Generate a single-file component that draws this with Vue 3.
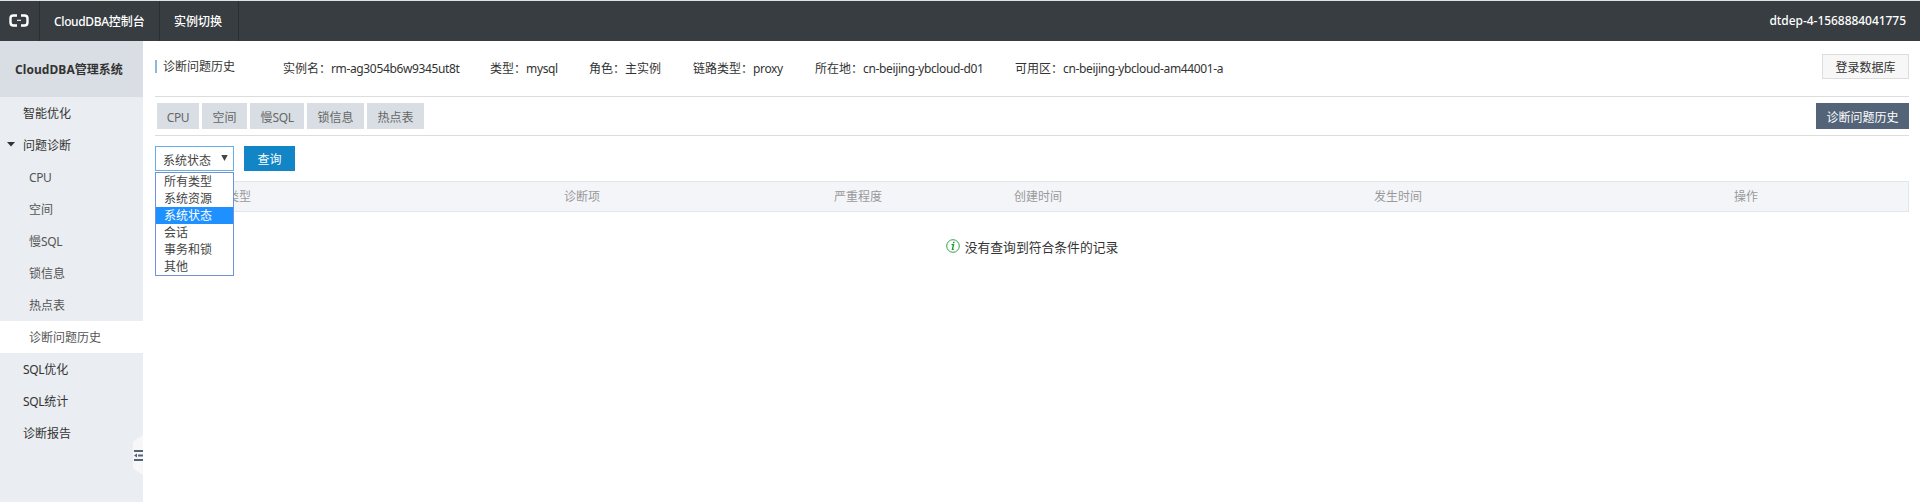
<script setup>
const menu = [
  { zh: '智能优化' },
  { zh: '问题诊断', open: true },
  { lat: 'CPU', sub: true },
  { zh: '空间', sub: true },
  { pre: '慢', lat: 'SQL', sub: true },
  { zh: '锁信息', sub: true },
  { zh: '热点表', sub: true },
  { zh: '诊断问题历史', sub: true, active: true },
  { lat: 'SQL', zh: '优化' },
  { lat: 'SQL', zh: '统计' },
  { zh: '诊断报告' },
]
const info = [
  { k: '实例名：', v: 'rm-ag3054b6w9345ut8t', w: 207 },
  { k: '类型：', v: 'mysql', w: 99 },
  { k: '角色：', zh: '主实例', w: 104 },
  { k: '链路类型：', v: 'proxy', w: 122 },
  { k: '所在地：', v: 'cn-beijing-ybcloud-d01', w: 200 },
  { k: '可用区：', v: 'cn-beijing-ybcloud-am44001-a', w: 230 },
]
const tabs = [
  { lat: 'CPU', w: 42 },
  { zh: '空间', w: 45 },
  { zh: '慢', lat: 'SQL', w: 54 },
  { zh: '锁信息', w: 57 },
  { zh: '热点表', w: 57 },
]
const options = ['所有类型', '系统资源', '系统状态', '会话', '事务和锁', '其他']
const columns = ['问题类型', '诊断项', '严重程度', '创建时间', '发生时间', '操作']
</script>

<template>
  <div class="page">
    <header class="topbar">
      <div class="logo">
        <svg width="20" height="13" viewBox="0 0 20 13">
          <path d="M8 1.500H4.500Q1.500 1.500 1.500 4.500v4q0 3 3 3H8M12 1.500h3.500q3 0 3 3v4q0 3-3 3H12" fill="none" stroke="#fff" stroke-width="2.400" />
          <path d="M8 6.300h4" stroke="#fff" stroke-width="1.100" />
        </svg>
      </div>
      <div class="nav console"><span class="lat">CloudDBA</span>控制台</div>
      <div class="nav switch">实例切换</div>
      <div class="user lat">dtdep-4-1568884041775</div>
    </header>
    <div class="body">
      <aside class="side">
        <div class="side-title"><span class="lat">CloudDBA</span>管理系统</div>
        <div v-for="(m, i) in menu" :key="i" class="item" :class="{ sub: m.sub, active: m.active }">
          <svg v-if="m.open" class="caret" width="8" height="5" viewBox="0 0 8 5"><path d="M0 0h8L4 4.500z" fill="#333" /></svg>
          {{ m.pre }}<span v-if="m.lat" class="lat">{{ m.lat }}</span>{{ m.zh }}
        </div>
        <svg class="handle" width="10" height="40" viewBox="0 0 10 40">
          <path d="M10 0v40L0 33.500V6.500z" fill="#f7f7f7" />
          <path d="M1 16h9M5 20.500h5M1 25h9" stroke="#546478" stroke-width="2" />
          <path d="M1 20.500l3-2v4z" fill="#546478" />
        </svg>
      </aside>
      <main class="main">
        <section class="head">
          <h1>诊断问题历史</h1>
          <div class="info">
            <div v-for="x in info" :key="x.k" :style="{ width: x.w + 'px' }">{{ x.k }}<span v-if="x.v" class="lat">{{ x.v }}</span>{{ x.zh }}</div>
          </div>
          <button class="login">登录数据库</button>
        </section>
        <section class="tabs">
          <div v-for="(t, i) in tabs" :key="i" class="tab" :style="{ width: t.w + 'px' }">{{ t.zh }}<span v-if="t.lat" class="lat">{{ t.lat }}</span></div>
          <div class="tab history">诊断问题历史</div>
        </section>
        <section class="filter">
          <div class="select">
            <span>系统状态</span>
            <svg width="7" height="6" viewBox="0 0 7 6"><path d="M.3 0h6.400L3.500 6z" fill="#444" /></svg>
            <div class="options">
              <div v-for="o in options" :key="o" class="option" :class="{ chosen: o === '系统状态' }">{{ o }}</div>
            </div>
          </div>
          <button class="query">查询</button>
        </section>
        <div class="thead"><span v-for="c in columns" :key="c">{{ c }}</span></div>
        <div class="empty">
          <svg width="14" height="14" viewBox="0 0 14 14">
            <circle cx="7" cy="7" r="6.300" fill="none" stroke="#35a14b" stroke-width="1" />
            <path d="M5.500 5.700h2L6.400 10.300h1.300" fill="none" stroke="#159a2c" stroke-width="1.300" />
            <path d="M7.200 2.800h1.500l-.4 1.400H6.800z" fill="#159a2c" />
          </svg>
          <span>没有查询到符合条件的记录</span>
        </div>
      </main>
    </div>
  </div>
</template>

<style>
body { margin: 0; background: #fff; overflow: hidden; }
</style>

<style scoped>
* { box-sizing: border-box; }
.page { height: 502px; display: flex; flex-direction: column; font-family: "Noto Sans CJK SC", sans-serif; font-size: 12px; line-height: 18px; color: #333; white-space: nowrap; }
.lat { font-family: "Noto Sans", sans-serif; letter-spacing: -0.36px; }
button { font: inherit; padding: 0; }
.topbar { flex: none; height: 41px; border-top: 1px solid #dfe4e1; background: #373d41; color: #fff; display: flex; line-height: 39px; font-weight: 500; }
.logo { width: 40px; border-right: 1px solid #2a2f32; padding: 13px 0 0 9px; line-height: 0; }
.nav { border-right: 1px solid #2a2f32; }
.console { width: 120px; padding-left: 14px; }
.switch { width: 79px; padding-left: 14px; }
.user { margin-left: auto; padding-right: 14px; letter-spacing: -0.05px; }
.body { flex: 1; display: flex; }
.side { width: 143px; background: #eaedf1; position: relative; }
.side-title { height: 56px; line-height: 55px; padding-left: 15px; background: #d9dee4; font-weight: 700; }
.side-title .lat { letter-spacing: 0.07px; }
.item { height: 32px; line-height: 31px; padding-left: 23px; position: relative; }
.item.sub { padding-left: 29px; color: #555; }
.item.active { background: #fff; }
.caret { position: absolute; left: 7px; top: 13px; }
.handle { position: absolute; right: 0; top: 394px; }
.main { flex: 1; padding: 0 11px 0 12px; }
.head { height: 56px; border-bottom: 1px solid #ddd; display: flex; align-items: flex-start; }
h1 { margin: 19px 0 0; height: 13px; width: 128px; border-left: 2px solid #88b7e0; padding-left: 6px; font-size: 12px; font-weight: 400; line-height: 12px; }
.info { display: flex; padding-top: 18px; }
.login { margin: 13px 0 0 auto; width: 87px; height: 25px; border: 1px solid #ddd; background: #f7f7f7; color: #333; line-height: 22px; }
.tabs { height: 39px; border-bottom: 1px solid #ddd; display: flex; gap: 3px; padding: 6px 0 0 2px; }
.tab { height: 26px; line-height: 27px; text-align: center; background: #d9dee4; color: #666; }
.history { margin-left: auto; width: 93px; background: #546478; color: #fff; }
.filter { display: flex; gap: 10px; padding-top: 10px; }
.select { position: relative; width: 79px; height: 25px; border: 1px solid #66afe9; padding: 0 5px 0 7px; display: flex; justify-content: space-between; line-height: 25px; color: #444; }
.select > svg { margin-top: 8px; }
.options { position: absolute; z-index: 2; left: -1px; top: 25px; width: 79px; height: 104px; background: #fff; border: 1px solid #7292d6; line-height: 16px; }
.option { height: 17px; padding-left: 8px; }
.chosen { background: #1e90ff; color: #fff; }
.query { width: 51px; height: 25px; border: 0; background: #1185c6; color: #fff; line-height: 24px; }
.thead { margin-top: 10px; height: 31px; border: 1px solid #e1e6eb; background: #f4f5f9; color: #999; padding-left: 47px; display: grid; grid-template-columns: 361px 270px 180px 360px 360px 1fr; line-height: 27px; }
.empty { display: flex; justify-content: center; gap: 5px; padding: 26px 0 0; font-size: 12.8px; line-height: 17px; }
.empty svg { margin-top: 1px; }
</style>
